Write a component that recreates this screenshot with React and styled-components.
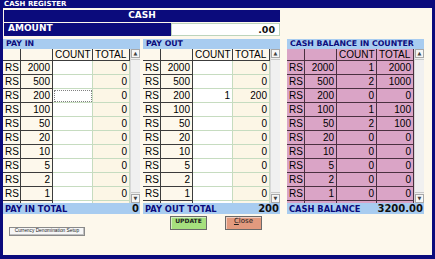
import React from 'react';
import styled, { createGlobalStyle } from 'styled-components';

const GlobalStyle = createGlobalStyle`
  html, body {
    margin: 0;
    padding: 0;
    background: #ffffff;
  }
`;

const NAVY = '#0b0b7c';
const SKY = '#a8ccf0';
const CREAM = '#fdf8ec';
const PINK = '#daa4c6';

const Window = styled.div`
  width: 435px;
  height: 259px;
  box-sizing: border-box;
  background: ${NAVY};
  padding: 0 3px 4px 3px;
  display: flex;
  flex-direction: column;
`;

const TitleBar = styled.div`
  height: 8px;
  line-height: 8px;
  padding-left: 1px;
  color: #ffffff;
  font: bold 7px "DejaVu Sans", sans-serif;
`;

const Body = styled.div`
  flex: 1;
  background: ${CREAM};
  display: flex;
  flex-direction: column;
  padding-top: 2px;
`;

const CashBar = styled.div`
  margin-left: 1px;
  width: 276px;
  height: 12px;
  line-height: 12px;
  background: ${NAVY};
  color: #ffffff;
  text-align: center;
  font: bold 9px "DejaVu Sans", sans-serif;
`;

const AmountRow = styled.div`
  margin: 1px 0 0 1px;
  display: flex;
  height: 13px;
  width: 276px;
`;

const AmountLabel = styled.div`
  width: 167px;
  background: ${NAVY};
  color: #ffffff;
  padding-left: 4px;
  line-height: 13px;
  font: bold 9px "DejaVu Sans", sans-serif;
  box-sizing: border-box;
`;

const AmountInput = styled.div`
  flex: 1;
  background: #ffffff;
  border: 1px solid #bcd4bc;
  box-sizing: border-box;
  text-align: right;
  padding-right: 4px;
  line-height: 11px;
  font: bold 9.5px "DejaVu Sans", sans-serif;
  color: #101010;
`;

const PanelRow = styled.div`
  display: flex;
  margin-top: 3px;
`;

const Panel = styled.div`
  width: 137px;
  margin-left: ${p => p.$offset}px;
  display: flex;
  flex-direction: column;
`;

const PanelHeader = styled.div`
  height: 10px;
  line-height: 10px;
  background: ${SKY};
  color: ${NAVY};
  padding-left: 3px;
  font: bold 7.8px "DejaVu Sans", sans-serif;
`;

const GridArea = styled.div`
  height: 154px;
  display: flex;
  overflow: hidden;
`;

const Table = styled.div`
  flex: 1;
  overflow: hidden;
`;

const Row = styled.div`
  display: grid;
  grid-template-columns: 18px 32px 40px 37px;
  height: ${p => p.$h}px;
`;

const Cell = styled.div`
  box-sizing: border-box;
  background: ${p => p.$bg};
  border-right: 1px solid ${p => p.$line};
  border-bottom: 1px solid ${p => p.$line};
  outline: ${p => (p.$focus ? '1px dotted #808080' : 'none')};
  outline-offset: -2px;
  text-align: ${p => p.$align || 'right'};
  padding: 0 2px;
  font: 10px "Liberation Sans", Arial, sans-serif;
  line-height: ${p => p.$h - 1}px;
  color: #000000;
  white-space: nowrap;
  overflow: hidden;
`;

const Scrollbar = styled.div`
  width: 10px;
  background: #eeeeee;
  border-left: 1px solid #d8d8d8;
  box-sizing: border-box;
  display: flex;
  flex-direction: column;
`;

const ScrollButton = styled.div`
  height: 9px;
  background: #f6f6f6;
  border: 1px solid #a8a8a8;
  box-sizing: border-box;
  font: 5px "DejaVu Sans", sans-serif;
  line-height: 7px;
  text-align: center;
  color: #404040;
`;

const ScrollThumb = styled.div`
  flex: 1;
  margin: 1px 0;
  background: #f0f0f0;
  border-top: 1px solid #c8c8c8;
  border-bottom: 1px solid #c8c8c8;
`;

const TotalBar = styled.div`
  height: 11px;
  background: ${SKY};
  display: flex;
  justify-content: space-between;
  align-items: center;
  padding: 0 1px 0 2px;
`;

const TotalLabel = styled.span`
  color: ${NAVY};
  font: bold 8.3px "DejaVu Sans", sans-serif;
`;

const TotalValue = styled.span`
  color: #101010;
  font: bold 10px "DejaVu Sans", sans-serif;
`;

const ButtonRow = styled.div`
  display: flex;
  align-items: flex-start;
  margin-top: 2px;
  padding-left: 6px;
`;

const SetupButton = styled.div`
  margin-top: 11px;
  width: 76px;
  height: 9px;
  box-sizing: border-box;
  background: #f6f6f6;
  border: 1px solid #8a8a8a;
  box-shadow: inset -1px -1px 0 #c0c0c0;
  text-align: center;
  line-height: 7px;
  font: 4.8px "Liberation Sans", Arial, sans-serif;
  color: #202020;
  white-space: nowrap;
`;

const ActionButton = styled.div`
  margin-left: ${p => p.$offset}px;
  width: 37px;
  height: 14px;
  box-sizing: border-box;
  background: ${p => p.$bg};
  border: 1px solid #6a6a6a;
  box-shadow: inset 1px 1px 0 rgba(255,255,255,0.5);
  text-align: center;
  line-height: 12px;
  font: ${p => p.$font};
  color: #202020;
`;

const denoms = [2000, 500, 200, 100, 50, 20, 10, 5, 2, 1];

const payOutCounts = { 200: 1 };
const balance = {
  2000: [1, 2000], 500: [2, 1000], 200: [0, 0], 100: [1, 100], 50: [2, 100],
  20: [0, 0], 10: [0, 0], 5: [0, 0], 2: [0, 0], 1: [0, 0],
};

function ScrollBar() {
  return (
    <Scrollbar>
      <ScrollButton>▲</ScrollButton>
      <ScrollThumb />
      <ScrollButton>▼</ScrollButton>
    </Scrollbar>
  );
}

function EntryGrid({ counts, focusRow }) {
  const dark = '#3c3c3c';
  const green = '#c6dcc0';
  return (
    <GridArea>
      <Table>
        <Row $h={12}>
          <Cell $h={12} $bg={CREAM} $line={dark} />
          <Cell $h={12} $bg={CREAM} $line={dark} />
          <Cell $h={12} $bg={CREAM} $line={dark} $align="left">COUNT</Cell>
          <Cell $h={12} $bg={CREAM} $line={dark} $align="left">TOTAL</Cell>
        </Row>
        {denoms.map(d => (
          <Row key={d} $h={14}>
            <Cell $h={14} $bg={CREAM} $line={dark} $align="left">RS</Cell>
            <Cell $h={14} $bg={CREAM} $line={dark}>{d}</Cell>
            <Cell $h={14} $bg="#ffffff" $line={green} $focus={focusRow === d}>
              {counts[d] || ''}
            </Cell>
            <Cell $h={14} $bg="#fcf6e6" $line={green}>{(counts[d] || 0) * d}</Cell>
          </Row>
        ))}
        <Row $h={14}>
          <Cell $h={14} $bg={CREAM} $line={dark} />
          <Cell $h={14} $bg={CREAM} $line={dark} />
          <Cell $h={14} $bg="#ffffff" $line={green} />
          <Cell $h={14} $bg="#fcf6e6" $line={green} />
        </Row>
      </Table>
      <ScrollBar />
    </GridArea>
  );
}

function BalanceGrid() {
  const line = '#4a3040';
  return (
    <GridArea>
      <Table>
        <Row $h={12}>
          <Cell $h={12} $bg={PINK} $line={line} />
          <Cell $h={12} $bg={PINK} $line={line} />
          <Cell $h={12} $bg={PINK} $line={line} $align="left">COUNT</Cell>
          <Cell $h={12} $bg={PINK} $line={line} $align="left">TOTAL</Cell>
        </Row>
        {denoms.map(d => (
          <Row key={d} $h={14}>
            <Cell $h={14} $bg={PINK} $line={line} $align="left">RS</Cell>
            <Cell $h={14} $bg={PINK} $line={line}>{d}</Cell>
            <Cell $h={14} $bg={PINK} $line={line}>{balance[d][0]}</Cell>
            <Cell $h={14} $bg={PINK} $line={line}>{balance[d][1]}</Cell>
          </Row>
        ))}
        <Row $h={14}>
          <Cell $h={14} $bg={PINK} $line={line} />
          <Cell $h={14} $bg={PINK} $line={line} />
          <Cell $h={14} $bg={PINK} $line={line} />
          <Cell $h={14} $bg={PINK} $line={line} />
        </Row>
      </Table>
      <ScrollBar />
    </GridArea>
  );
}

export default function App() {
  return (
    <>
      <GlobalStyle />
      <Window>
        <TitleBar>CASH REGISTER</TitleBar>
        <Body>
          <CashBar>CASH</CashBar>
          <AmountRow>
            <AmountLabel>AMOUNT</AmountLabel>
            <AmountInput>.00</AmountInput>
          </AmountRow>
          <PanelRow>
            <Panel $offset={0}>
              <PanelHeader>PAY IN</PanelHeader>
              <EntryGrid counts={{}} focusRow={200} />
              <TotalBar>
                <TotalLabel>PAY IN TOTAL</TotalLabel>
                <TotalValue>0</TotalValue>
              </TotalBar>
            </Panel>
            <Panel $offset={3}>
              <PanelHeader>PAY OUT</PanelHeader>
              <EntryGrid counts={payOutCounts} />
              <TotalBar>
                <TotalLabel>PAY OUT TOTAL</TotalLabel>
                <TotalValue>200</TotalValue>
              </TotalBar>
            </Panel>
            <Panel $offset={7}>
              <PanelHeader>CASH BALANCE IN COUNTER</PanelHeader>
              <BalanceGrid />
              <TotalBar>
                <TotalLabel>CASH BALANCE</TotalLabel>
                <TotalValue>3200.00</TotalValue>
              </TotalBar>
            </Panel>
          </PanelRow>
          <ButtonRow>
            <SetupButton>Currency Denomination Setup</SetupButton>
            <ActionButton $offset={85} $bg="#a6e07e" $font={'bold 6px "DejaVu Sans", sans-serif'}>
              UPDATE
            </ActionButton>
            <ActionButton $offset={18} $bg="#e29a7e" $font={'7px "DejaVu Sans", sans-serif'}>
              <u>C</u>lose
            </ActionButton>
          </ButtonRow>
        </Body>
      </Window>
    </>
  );
}
